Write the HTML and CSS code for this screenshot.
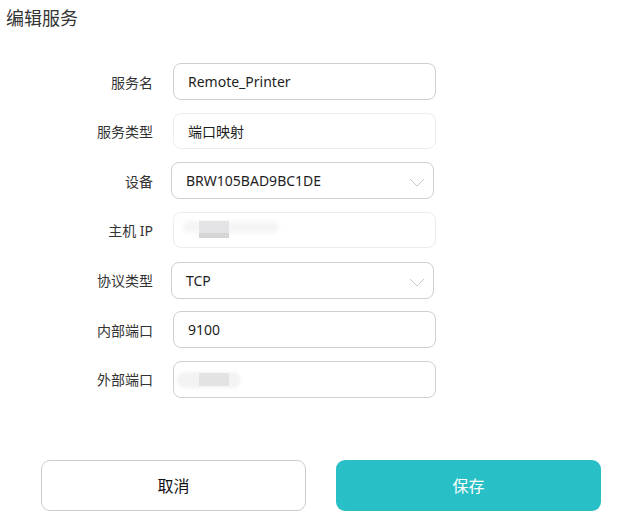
FILE: index.html
```html
<!DOCTYPE html>
<html lang="zh-CN">
<head>
<meta charset="utf-8">
<title>编辑服务</title>
<link rel="stylesheet" href="styles.css">
</head>
<body>
<div class="page">
  <h1 class="title">编辑服务</h1>
  <form class="form">
    <label class="label">服务名</label>
    <div class="field">Remote_Printer</div>

    <label class="label">服务类型</label>
    <div class="field readonly">端口映射</div>

    <label class="label">设备</label>
    <div class="field select">BRW105BAD9BC1DE
      <svg class="chev" width="16" height="9" viewBox="0 0 16 9"><path d="M1 1 L8 8 L15 1" fill="none" stroke="#c8c8c8" stroke-width="1"/></svg>
    </div>

    <label class="label">主机 IP</label>
    <div class="field readonly blurfield">
      <span class="smudge s-ip">
        <span class="sm-a"></span><span class="sm-b"></span><span class="sm-c"></span>
      </span>
    </div>

    <label class="label">协议类型</label>
    <div class="field select">TCP
      <svg class="chev" width="16" height="9" viewBox="0 0 16 9"><path d="M1 1 L8 8 L15 1" fill="none" stroke="#c8c8c8" stroke-width="1"/></svg>
    </div>

    <label class="label">内部端口</label>
    <div class="field">9100</div>

    <label class="label">外部端口</label>
    <div class="field blurfield">
      <span class="smudge s-port">
        <span class="sm-a"></span><span class="sm-b"></span><span class="sm-c"></span>
      </span>
    </div>
  </form>
  <div class="actions">
    <button type="button" class="btn cancel">取消</button>
    <button type="button" class="btn save">保存</button>
  </div>
</div>
</body>
</html>
```
FILE: styles.css
```css
html, body {
  margin: 0;
  padding: 0;
  background: #fff;
}
body {
  font-family: "Noto Sans", "Noto Sans CJK SC", sans-serif;
  color: #222;
}
.page {
  width: 624px;
  height: 524px;
  position: relative;
}
.title {
  margin: 0;
  padding: 5px 0 0 6px;
  font-size: 18px;
  font-weight: 400;
  line-height: 24px;
  color: #333;
  font-family: "Noto Sans CJK SC", sans-serif;
}
.form {
  display: grid;
  grid-template-columns: 153px 263px;
  grid-auto-rows: 37px;
  column-gap: 20px;
  row-gap: 12.67px;
  margin-top: 34px;
}
.label {
  display: flex;
  align-items: center;
  justify-content: flex-end;
  font-size: 14px;
  color: #333;
  font-family: "Noto Sans", "Noto Sans CJK SC", sans-serif;
}
.field {
  box-sizing: border-box;
  height: 37px;
  border: 1px solid #cfcfcf;
  border-radius: 8px;
  padding: 0 14px;
  display: flex;
  align-items: center;
  font-size: 14px;
  color: #1e1e1e;
  position: relative;
}
.readonly {
  border-color: #ececec;
  height: 36px;
}
.select {
  margin-left: -2px;
  margin-right: 2px;
  padding-left: 14px;
}
.chev {
  position: absolute;
  right: 8px;
  top: 15px;
}
.blurfield {
  padding: 0;
}
.smudge {
  position: absolute;
  display: block;
}
.smudge span {
  position: absolute;
  display: block;
}
.s-ip {
  left: 9px;
  top: 8px;
  width: 100px;
  height: 18px;
}
.s-ip .sm-a {
  left: 0; top: 0; width: 96px; height: 12px;
  background: #f5f5f6;
  border-radius: 6px;
  filter: blur(2px);
}
.s-ip .sm-b {
  left: 16px; top: 0; width: 30px; height: 12px;
  background: #e4e4e6;
}
.s-ip .sm-c {
  left: 16px; top: 12px; width: 30px; height: 5px;
  background: #d5d5d5;
}
.s-port {
  left: 3px;
  top: 10px;
  width: 66px;
  height: 18px;
}
.s-port .sm-a {
  left: 0; top: 0; width: 64px; height: 16px;
  background: #f3f3f3;
  border-radius: 8px;
  filter: blur(1.5px);
}
.s-port .sm-b {
  left: 22px; top: 1px; width: 30px; height: 13px;
  background: #e3e3e3;
}
.s-port .sm-c {
  display: none;
}
.actions {
  display: flex;
  gap: 30px;
  padding-left: 41px;
  margin-top: 62px;
}
.btn {
  box-sizing: border-box;
  width: 265px;
  height: 51px;
  border-radius: 9px;
  font-size: 16px;
  font-family: "Noto Sans CJK SC", sans-serif;
  cursor: pointer;
}
.cancel {
  background: #fff;
  border: 1px solid #cccccc;
  color: #111;
}
.save {
  background: #29bfc6;
  border: none;
  color: #fff;
}
```
